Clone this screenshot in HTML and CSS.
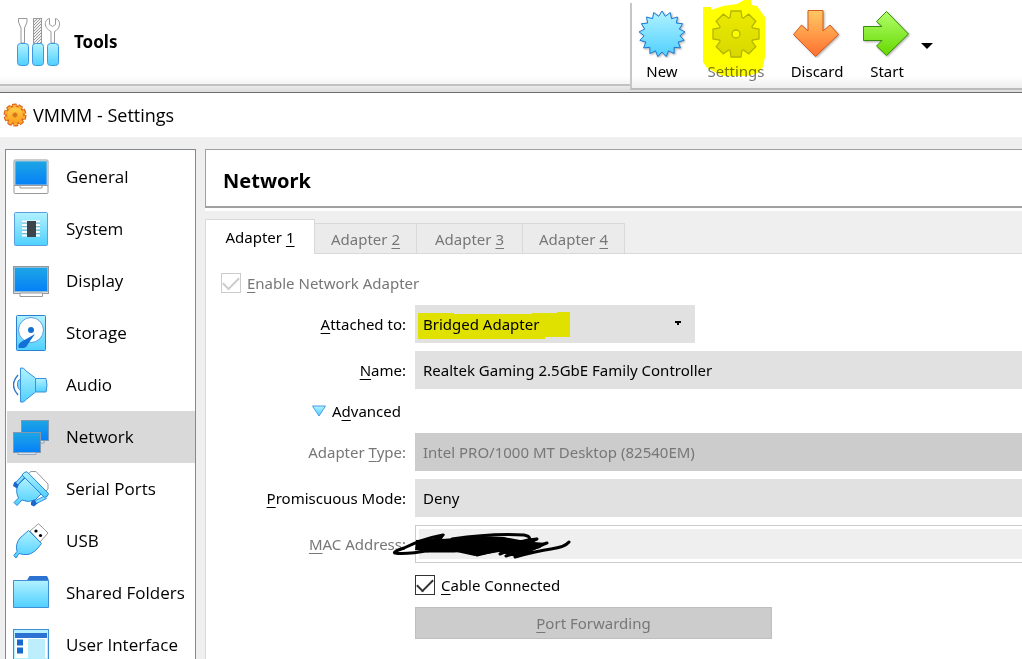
FILE: index.html
```html
<!DOCTYPE html>
<html lang="en">
<head>
<meta charset="utf-8">
<title>VMMM - Settings</title>
<link rel="stylesheet" href="styles.css">
</head>
<body>
<svg class="defs" width="0" height="0" aria-hidden="true">
  <defs>
    <linearGradient id="aqua" x1="0" y1="0" x2="0" y2="1"><stop offset="0" stop-color="#b2f2ff"/><stop offset="1" stop-color="#4fd0ff"/></linearGradient>
    <linearGradient id="screen" x1="0" y1="0" x2="0" y2="1"><stop offset="0" stop-color="#1ea6e4"/><stop offset="1" stop-color="#0480f8"/></linearGradient>
    <linearGradient id="orange" x1="0" y1="0" x2="0" y2="1"><stop offset="0" stop-color="#ffc864"/><stop offset="1" stop-color="#ff7030"/></linearGradient>
    <linearGradient id="amber" x1="0" y1="0" x2="0" y2="1"><stop offset="0" stop-color="#ffd24a"/><stop offset="1" stop-color="#ff9c1c"/></linearGradient>
    <linearGradient id="green" x1="0" y1="0" x2="0" y2="1"><stop offset="0" stop-color="#b0ff6a"/><stop offset="1" stop-color="#66d800"/></linearGradient>
    <linearGradient id="grey" x1="0" y1="0" x2="0" y2="1"><stop offset="0" stop-color="#eaeaea"/><stop offset="1" stop-color="#d8d8d8"/></linearGradient>
    <pattern id="hatch" width="3" height="3" patternUnits="userSpaceOnUse"><rect width="3" height="3" fill="#f2f2f2"/><path d="M0 3L3 0" stroke="#999" stroke-width="1"/></pattern>
  </defs>
</svg>

<header class="manager">
  <div class="tools">
    <svg width="48" height="52" viewBox="0 0 48 52" aria-hidden="true">
      <path d="M2.500 2.500h8.500v3.500l-2.500 6v15h-3.500v-15l-2.500-6z" fill="#fff" stroke="#999"/>
      <rect x="17.500" y="2.500" width="8" height="25" fill="url(#hatch)" stroke="#999"/>
      <path d="M35 27V15.500C31 13.500 28.500 10 29.500 6.500C30 4 32 2.500 33.500 2.500V8.500L36.500 10.500L39.500 8.500V2.500C42 3 44 5.500 43.500 9C43 12 41 14.500 38.500 15.500V27z" fill="#fff" stroke="#999"/>
      <g fill="url(#aqua)" stroke="#3d98e4"><rect x="1.500" y="27.500" width="11" height="22" rx="3"/><rect x="16.500" y="27.500" width="11" height="22" rx="3"/><rect x="31.500" y="27.500" width="11" height="22" rx="3"/></g>
    </svg>
    <strong>Tools</strong>
  </div>
  <div class="toolbar">
    <button type="button">
      <svg width="48" height="48" viewBox="0 0 48 48" aria-hidden="true"><path class="shadowed" d="M24 1L27.300 6.300 32.300 2.600 33.500 8.700 39.500 7 38.400 13.100 44.600 13.700 41.300 19.100 46.900 21.900 41.900 25.700 46.100 30.300 40.100 32 42.400 37.900 36.100 37.300 36.100 43.600 30.500 40.800 28.200 46.600 24 42 19.800 46.600 17.500 40.800 11.900 43.600 11.900 37.300 5.600 37.900 7.900 32 1.900 30.300 6.100 25.700 1.100 21.900 6.700 19.100 3.400 13.700 9.600 13.100 8.500 7 14.500 8.700 15.700 2.600 20.700 6.300z" fill="url(#aqua)" stroke="#1c78d2"/></svg>
      New
    </button>
    <button type="button" disabled>
      <svg width="48" height="48" viewBox="-24 -24 48 48" aria-hidden="true"><path d="M-6-16.500L-5-23 5-23 6-16.500 7.400-15.900 12.700-19.800 19.800-12.700 15.900-7.400 16.500-6 23-5 23 5 16.500 6 15.900 7.400 19.800 12.700 12.700 19.800 7.400 15.900 6 16.500 5 23-5 23-6 16.500-7.400 15.900-12.700 19.800-19.800 12.700-15.900 7.400-16.500 6-23 5-23-5-16.500-6-15.900-7.400-19.800-12.700-12.700-19.800-7.400-15.900z" fill="url(#grey)" stroke="#b4b4b4" stroke-width="1.300"/><circle r="4" fill="#fff" stroke="#b4b4b4" stroke-width="1.300"/></svg>
      Settings
      <svg class="marker" width="64" height="78" viewBox="0 0 64 78" aria-hidden="true"><path d="M0 7H8V10L20 6 34 4 41 0H48L49 5 54 6 62 17V57L60 67 55 73 44 76H20L4 68 0 62z" fill="#ff0"/></svg>
    </button>
    <button type="button">
      <svg width="48" height="48" viewBox="0 0 48 48" aria-hidden="true"><path class="shadowed" d="M15 .5H30V21L37 15 45.500 24.500 22.500 46.500 .5 24.500 8.500 15 15 21z" fill="url(#orange)" stroke="#d8581c"/></svg>
      Discard
    </button>
    <button type="button">
      <svg width="48" height="48" viewBox="0 0 48 48" aria-hidden="true"><path class="shadowed" d="M.5 16.500H19L13.500 11.500 23.500 1.500 45.500 24 23.500 45.500 13.500 36 19 30.500H.5z" fill="url(#green)" stroke="#3a8c0a"/></svg>
      Start
    </button>
    <button type="button" class="more" aria-label="Start options"><svg width="12" height="6" viewBox="0 0 12 6" aria-hidden="true"><path d="M0 0H12L6 6z"/></svg></button>
  </div>
</header>

<div class="titlebar">
  <svg width="24" height="24" viewBox="0 0 24 24" aria-hidden="true"><circle cx="12" cy="12" r="9.500" fill="none" stroke="#e0651a" stroke-width="4" stroke-dasharray="4.300 1.670"/><circle cx="12" cy="12" r="9" fill="url(#amber)" stroke="#e0651a" stroke-width="2"/><circle cx="12" cy="12" r="9" fill="none" stroke="#fbab30" stroke-width="2.500" stroke-dasharray="3.400 2.255" stroke-dashoffset="-.5"/><circle cx="12" cy="12" r="2.300" fill="#c87420" stroke="#f08a1c"/></svg>
  <h1>VMMM - Settings</h1>
</div>

<div class="dialog">
  <nav class="sidebar">
    <a href="#general"><svg width="36" height="36" viewBox="0 0 36 36" aria-hidden="true"><rect x="1" y="1" width="34" height="33.500" rx="1" fill="#fff" stroke="#999"/><rect x="2" y="2" width="32" height="24" fill="url(#screen)" stroke="#aac8da"/><path d="M1 26.500H35M7 27v2H29v-2" fill="none" stroke="#999"/></svg>General</a>
    <a href="#system"><svg width="36" height="36" viewBox="0 0 36 36" aria-hidden="true"><rect x="1.500" y="1.500" width="33" height="33" rx="1" fill="url(#aqua)" stroke="#5c9fe0"/><path d="M9 10.500H27M9 14H27M9 17.500H27M9 21H27M9 24.500H27" stroke="#fff" stroke-width="2"/><path d="M9 12H27M9 15.500H27M9 19H27M9 22.500H27" stroke="#7c9fae" stroke-width=".6"/><rect x="14" y="10" width="9" height="16" fill="#3c444c"/></svg>System</a>
    <a href="#display"><svg width="36" height="36" viewBox="0 0 36 36" aria-hidden="true"><rect x=".5" y="3.500" width="35" height="27" fill="#ddd" stroke="#999"/><rect x="1.500" y="4.500" width="33" height="24" fill="url(#screen)" stroke="#8cb9d8"/><path d="M7 30v3.500H29.500v-3.500z" fill="#fff" stroke="#999"/></svg>Display</a>
    <a href="#storage"><svg width="36" height="36" viewBox="0 0 36 36" aria-hidden="true"><rect x="3.500" y=".5" width="29" height="35" rx="1" fill="url(#aqua)" stroke="#2a80d4"/><circle cx="18" cy="15" r="12.500" fill="#fff" stroke="#5a9ee0"/><circle cx="18" cy="15" r="3" fill="#1470d0"/><path d="M22 19L8 27Q4 30 6 33H11Q14 32 15 29z" fill="#1270d6"/></svg>Storage</a>
    <a href="#audio"><svg width="36" height="36" viewBox="0 0 36 36" aria-hidden="true"><path d="M8 12Q4 13 4.500 18T8 23z" fill="#78d8ff" stroke="#3c90dc"/><path d="M7.500 1Q11 0 13 4L22.500 11V25L12.500 33Q11 36 7.500 35z" fill="url(#aqua)" stroke="#3c90dc"/><path d="M22.500 11.500H33Q35 18 33 25H22.500z" fill="url(#aqua)" stroke="#3c90dc"/><path d="M5 8Q-4 18 5 28" fill="none" stroke="#3578c8" stroke-width="1.500"/></svg>Audio</a>
    <a href="#network" aria-current="page"><svg width="36" height="36" viewBox="0 0 36 36" aria-hidden="true"><rect x="8.500" y="1.500" width="27" height="20" fill="url(#screen)" stroke="#7b98b2"/><path d="M14 22v2H31v-2" fill="#e0eaf2" stroke="#88a0b4"/><rect x=".5" y="13.500" width="27" height="20" fill="url(#screen)" stroke="#8298ac"/><path d="M5 33.500v2H23v-2z" fill="#cfe6fc" stroke="#98a8b8"/></svg>Network</a>
    <a href="#serial"><svg width="36" height="36" viewBox="0 0 36 36" aria-hidden="true"><path d="M15 3L18 .5H23L35 13V18L31 22z" fill="#fff" stroke="#999"/><path d="M4 34.500L1 31.500 5.500 27Q2 20 5 14L13 6 29 22 22 29Q15 32 9 29z" fill="url(#aqua)" stroke="#2d86d8"/><path d="M1 11.500Q4 9 6 13L4 17.500 0 15zM18 31L21 28.500 25 32 21 35.500 18 34z" fill="#1a66cc"/><path d="M4 12.500L12.500 3M23 31L33 26" stroke="#2d86d8" stroke-width="4"/><path d="M4 12.500L12.500 3M23 31L33 26" stroke="#88e2ff" stroke-width="2.200"/><path d="M9 4Q11 .5 14 .8L35.500 22.500Q35 26 31.500 26.500z" fill="url(#aqua)" stroke="#2d86d8"/></svg>Serial Ports</a>
    <a href="#usb"><svg width="36" height="36" viewBox="0 0 36 36" aria-hidden="true"><path d="M17 8L25.500 .7 35 10 27 19z" fill="#fff" stroke="#999"/><circle cx="23" cy="8" r="1.600"/><circle cx="27.500" cy="12.500" r="1.600"/><path d="M15.500 7.500L28.500 20.500Q22 30 15 31.500Q10 32 6 30.500L3 35 .8 32.500 4 28.500Q2 21 7 15z" fill="url(#aqua)" stroke="#2d86d8"/></svg>USB</a>
    <a href="#folders"><svg width="36" height="36" viewBox="0 0 36 36" aria-hidden="true"><path d="M13.500 6L16.500 1H34L35.500 4V9H13.500z" fill="#2c72d2"/><path d="M.5 5.500H35.500V32.500H.5z" fill="url(#aqua)" stroke="#3e8fd8"/></svg>Shared Folders</a>
    <a href="#interface"><svg width="36" height="36" viewBox="0 0 36 36" aria-hidden="true"><rect x=".5" y="2.500" width="35" height="33" fill="#b5f0fe" stroke="#3e8fd8"/><rect x="2" y="6" width="32" height="5" fill="#2c72d2"/><rect x="2" y="11" width="32" height="20" fill="#fff"/><rect x="4" y="12.500" width="6" height="6" fill="#1769d0"/><rect x="4" y="20.500" width="6" height="6" fill="#1769d0"/><rect x="15" y="12" width="17" height="19" fill="#bdeefb"/></svg>User Interface</a>
  </nav>

  <main class="page">
    <h2>Network</h2>
    <div class="tabs" role="tablist">
      <button type="button" role="tab" aria-selected="true">Adapter <u>1</u></button>
      <button type="button" role="tab">Adapter <u>2</u></button>
      <button type="button" role="tab">Adapter <u>3</u></button>
      <button type="button" role="tab">Adapter <u>4</u></button>
    </div>
    <form class="pane">
      <label class="check off enable"><input type="checkbox" checked disabled><span><u>E</u>nable Network Adapter</span></label>

      <label class="caption" for="attached"><u>A</u>ttached to:</label>
      <div class="attached">
        <select id="attached"><option>Bridged Adapter</option></select>
        <svg class="highlight" width="154" height="30" viewBox="0 0 154 30" aria-hidden="true"><path d="M1 3H37V4H115V3H140V2H153V27H128V29H1z" fill="#ff0"/></svg>
        <svg class="arrow" width="7" height="4" viewBox="0 0 7 4" aria-hidden="true"><path d="M0 0H6V2H4V4H2V2H0z"/></svg>
      </div>

      <label class="caption" for="name"><u>N</u>ame:</label>
      <select id="name"><option>Realtek Gaming 2.5GbE Family Controller</option></select>

      <button type="button" class="advanced caption"><svg width="16" height="12" viewBox="0 0 16 12" aria-hidden="true"><path d="M1.500 1H14.500L8 11z" fill="url(#aqua)" stroke="#4a9be8"/></svg><span>A<u>d</u>vanced</span></button>

      <label class="caption off" for="type">Adapter <u>T</u>ype:</label>
      <select id="type" disabled><option>Intel PRO/1000 MT Desktop (82540EM)</option></select>

      <label class="caption" for="mode"><u>P</u>romiscuous Mode:</label>
      <select id="mode"><option>Deny</option></select>

      <label class="caption off" for="mac"><u>M</u>AC Address:</label>
      <div class="mac">
        <input id="mac" type="text" disabled>
        <svg class="scribble" width="180" height="28" viewBox="0 0 180 28" aria-hidden="true">
          <path d="M24 9L40 8 53 3 50 8 92 5 112 6 128 9 145 8 142 11 154 12 148 17 137 20 124 26 107 21 83 25 60 20 36 21 23 19z"/>
          <g fill="none" stroke="#000" stroke-linecap="round" stroke-linejoin="round" stroke-width="3"><path d="M51 4Q30 8 12 17Q0 21 3 22Q12 24 40 19T69 16"/><path d="M60 8Q100 2 132 4Q142 6 134 12L85 24 136 9 145 8 108 23"/><path d="M114 25L155 12 123 26Q145 20 159 18T177 11"/><path d="M35 20H62L100 17"/></g>
        </svg>
      </div>

      <label class="check cable"><input type="checkbox" checked><span><u>C</u>able Connected</span></label>
      <button type="button" class="forward" disabled><span><u>P</u>ort Forwarding</span></button>
    </form>
  </main>
</div>
</body>
</html>
```
FILE: styles.css
```css
* { box-sizing: border-box; }
body {
  margin: 0;
  height: 100vh;
  overflow: hidden;
  display: flex;
  flex-direction: column;
  background: #efefef;
  color: #000;
  font: 15px/20px "Noto Sans", "Open Sans", sans-serif;
}
button, input, select { font: inherit; color: inherit; margin: 0; }
button { border: 0; padding: 0; background: none; }
svg { display: block; flex: none; }
u { text-decoration: underline; text-underline-offset: 3px; text-decoration-thickness: 1px; text-decoration-skip-ink: none; }
.defs { position: absolute; }

.manager {
  flex: none;
  display: grid;
  grid-template-columns: 630px 1fr;
  height: 93px;
  border-bottom: 1px solid #6e6e6e;
  background: linear-gradient(#fff 76px, #ddd);
}
.tools {
  display: flex;
  align-items: center;
  gap: 10px;
  height: 86px;
  padding-left: 16px;
  border-bottom: 2px solid #c2c2c2;
  background: linear-gradient(#fff 76px, #f4f4f4);
}
.tools strong { font-size: 17px; }
.toolbar {
  display: grid;
  grid-template-columns: 60px 88px 74px 66px 14px;
  align-content: start;
  height: 87px;
  margin-top: 3px;
  padding-top: 7px;
  border-left: 2px solid #c6c6c6;
  border-bottom: 2px solid #bbb;
  background: linear-gradient(#fff 73px, #eee);
}
.toolbar button { position: relative; display: flex; flex-direction: column; align-items: center; gap: 3px; }
.toolbar button:disabled { color: #777; }
.toolbar .more { justify-content: center; }
.shadowed { filter: drop-shadow(1px 1px 1px #aaa); }
.marker { position: absolute; left: 11px; top: -10px; mix-blend-mode: multiply; }

.titlebar {
  flex: none;
  display: flex;
  align-items: center;
  gap: 6px;
  height: 44px;
  padding-left: 3px;
  background: #fff;
}
.titlebar h1 { margin: 0; font: 18px/24px "Open Sans", sans-serif; }

.dialog {
  flex: 1;
  min-height: 0;
  display: grid;
  grid-template-columns: 191px 1fr;
  gap: 9px;
  padding: 12px 0 0 5px;
}
.sidebar {
  padding: 1px 0 0 1px;
  border: 1px solid #828790;
  border-bottom: 0;
  background: #fff;
  overflow: hidden;
  font: 17px/24px "Open Sans", sans-serif;
}
.sidebar a {
  display: flex;
  align-items: center;
  gap: 17px;
  height: 52px;
  padding-left: 6px;
  color: #000;
  text-decoration: none;
  white-space: nowrap;
}
.sidebar a[aria-current] { background: #d9d9d9; }

.page { display: flex; flex-direction: column; min-width: 0; }
.page h2 {
  margin: 0 0 11px;
  padding: 20px 17px 14px;
  border: 1px solid #a0a0a0;
  border-width: 1px 0 2px 1px;
  background: #fff;
  font: bold 20px/22px "Noto Sans", sans-serif;
  box-shadow: 0 3px #fff;
}
.tabs { display: flex; align-items: flex-end; border-bottom: 1px solid #d9d9d9; }
.tabs button {
  height: 30px;
  width: 102px;
  border: 1px solid #d9d9d9;
  border-width: 1px 1px 0 0;
  background: #ebebeb;
  color: #777;
}
.tabs button:nth-child(3) { width: 106px; }
.tabs button[aria-selected] {
  width: 110px;
  height: 35px;
  margin-bottom: -1px;
  border-left-width: 1px;
  background: #fff;
  color: #000;
}

.pane {
  flex: 1;
  display: grid;
  grid-template-columns: 185px 1fr;
  column-gap: 9px;
  row-gap: 8px;
  align-content: start;
  align-items: center;
  padding: 15px 0 0 15px;
  border-left: 1px solid #d9d9d9;
  background: #fff;
  white-space: nowrap;
}
.pane > .caption { grid-column: 1; justify-self: end; }
.off { color: #777; }
.pane select {
  appearance: none;
  display: block;
  width: 100%;
  height: 38px;
  padding: 0 8px;
  border: 0;
  border-radius: 0;
  background: #e1e1e1;
  opacity: 1;
}
.pane select:disabled { background: #ccc; color: #777; }
.attached { position: relative; width: 280px; }
.highlight { position: absolute; left: 2px; top: 5px; mix-blend-mode: multiply; }
.arrow { position: absolute; right: 13px; top: 16px; }

.pane .check { display: flex; align-items: center; gap: 6px; height: 28px; justify-self: start; }
.enable { grid-column: 1 / -1; }
.cable { grid-column: 2; }
.check input {
  appearance: none;
  display: grid;
  place-items: center;
  width: 20px;
  height: 20px;
  border: 1px solid #333;
  background: #fff;
}
.check input::before {
  content: "";
  width: 14px;
  height: 7px;
  border: solid #333;
  border-width: 0 0 2px 2px;
  transform: translateY(-2px) rotate(-45deg);
}
.check input:disabled, .check input:disabled::before { border-color: #ccc; }

.advanced { display: flex; align-items: center; gap: 5px; height: 28px; margin-right: 5px; }
.mac { position: relative; }
.mac input {
  display: block;
  width: 100%;
  height: 38px;
  padding: 3px 0 3px 3px;
  border: 1px solid #ccc;
  border-right: 0;
  background: #efefef content-box;
  box-shadow: inset 0 0 0 0 #fff;
}
.scribble { position: absolute; left: -23px; top: 6px; }
.forward {
  grid-column: 2;
  width: 357px;
  height: 32px;
  border: 1px solid #bfbfbf;
  background: #ccc;
  color: #777;
}
```
